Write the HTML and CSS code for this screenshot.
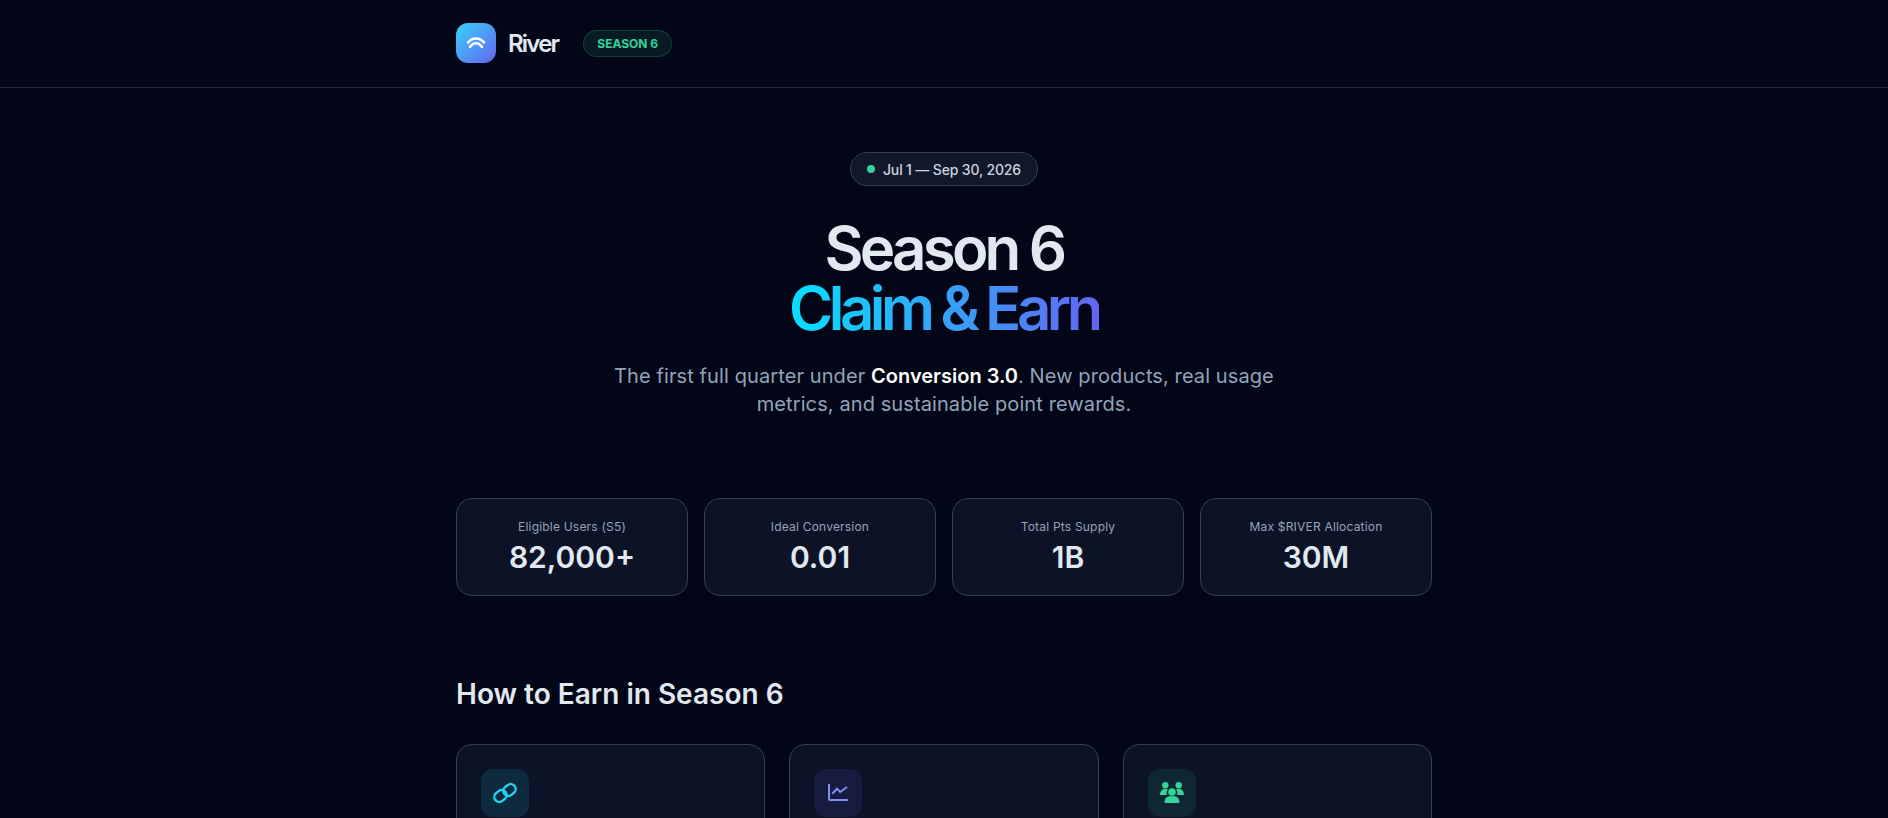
FILE: index.html
```html
<!DOCTYPE html>
<html lang="en">
<head>
  <meta charset="UTF-8" />
  <title>River Season 6</title>
  <link rel="stylesheet" href="styles.css">
</head>
<body>
  <header class="topbar">
    <div class="container topbar-inner">
      <div class="logo-mark">
        <svg width="40" height="40" viewBox="0 0 40 40" fill="none" stroke="#fff" stroke-width="2.500" stroke-linecap="round"><path d="M12 19.500c3.500-5.500 12.500-5.500 16 0"/><path d="M14 24c3-5 9-5 12 0"/></svg>
      </div>
      <span class="logo-text">River</span>
      <span class="season-tag">SEASON 6</span>
    </div>
  </header>
  <main class="container">
    <section class="hero">
      <div class="date-pill"><span class="dot"></span>Jul 1 — Sep 30, 2026</div>
      <h1>Season 6<br><span class="gradient">Claim &amp; Earn</span></h1>
      <p class="lead">The first full quarter under <strong>Conversion 3.0</strong>. New products, real usage metrics, and sustainable point rewards.</p>
    </section>
    <section class="stats">
      <div class="stat"><div class="stat-label">Eligible Users (S5)</div><div class="stat-value">82,000+</div></div>
      <div class="stat"><div class="stat-label">Ideal Conversion</div><div class="stat-value">0.01</div></div>
      <div class="stat"><div class="stat-label">Total Pts Supply</div><div class="stat-value">1B</div></div>
      <div class="stat"><div class="stat-label">Max $RIVER Allocation</div><div class="stat-value">30M</div></div>
    </section>
    <h2>How to Earn in Season 6</h2>
    <section class="cards">
      <div class="card"><div class="icon icon-cyan">
        <svg width="26" height="24" viewBox="0 0 26 24" fill="none" stroke="currentColor" stroke-width="2.400"><rect x="2" y="10" width="13" height="10" rx="5" transform="rotate(-38 8.500 15)"/><rect x="11" y="4" width="13" height="10" rx="5" transform="rotate(-38 17.500 9)"/></svg>
      </div></div>
      <div class="card"><div class="icon icon-indigo">
        <svg width="20" height="20" viewBox="0 0 20 20" fill="none" stroke="currentColor" stroke-width="2"><path d="M1 1v15a1 1 0 0 0 1 1h18"/><path d="M4.300 10.700L9 5.700l3.300 3.300L19 4"/></svg>
      </div></div>
      <div class="card"><div class="icon icon-green">
        <svg width="26" height="22" viewBox="0 0 26 22" fill="currentColor"><circle cx="6.300" cy="3.200" r="3.200"/><circle cx="19.700" cy="3.200" r="3.200"/><circle cx="13" cy="10" r="3.800"/><path d="M1 13c0-3.500 2-6 4.500-6h2.500c.8 0 1 .3.500 1-1 1.500-1.200 3-.7 5z"/><path d="M25 13c0-3.500-2-6-4.500-6H18c-.8 0-1 .3-.5 1 1 1.500 1.200 3 .7 5z"/><path d="M5.700 21v-1.500c0-3 2.300-5.200 5-5.200h4.600c2.700 0 5 2.200 5 5.200V21z"/></svg>
      </div></div>
    </section>
  </main>
</body>
</html>
```

FILE: styles.css
```css
* {
  box-sizing: border-box;
}
html, body {
  height: 818px;
  overflow: hidden;
}
body {
  margin: 0;
  background: #020617;
  color: #e2e8f0;
  font-family: Inter, sans-serif;
}
.container {
  width: 976px;
  margin: 0 auto;
}
.topbar {
  height: 88px;
  border-bottom: 1px solid #1e293b;
}
.topbar-inner {
  height: 86px;
  display: flex;
  align-items: center;
}
.logo-mark {
  width: 40px;
  height: 40px;
  border-radius: 12px;
  background: linear-gradient(135deg, #38d0f8, #6366f1);
}
.logo-text {
  margin-left: 12px;
  font-size: 24px;
  font-weight: 600;
  letter-spacing: -1.8px;
}
.season-tag {
  margin-left: 25px;
  padding: 5px 13px;
  border-radius: 999px;
  background: rgba(52, 211, 153, 0.1);
  border: 1px solid rgba(52, 211, 153, 0.2);
  color: #34d399;
  font-size: 12px;
  font-weight: 700;
}
.hero {
  padding-top: 64px;
  text-align: center;
}
.date-pill {
  display: inline-flex;
  align-items: center;
  gap: 8px;
  height: 34px;
  padding: 0 16px;
  border-radius: 999px;
  background: #1e293b80;
  border: 1px solid #334155;
  color: #cbd5e1;
  font-size: 14px;
  font-weight: 500;
  letter-spacing: -0.15px;
}
.dot {
  width: 8px;
  height: 8px;
  border-radius: 50%;
  background: #34d399;
}
h1 {
  margin: 32px 0 0;
  font-size: 60px;
  line-height: 60px;
  font-weight: 600;
  letter-spacing: -3.8px;
}
.gradient {
  background: linear-gradient(90deg, #06e0ff, #6366f1);
  -webkit-background-clip: text;
  background-clip: text;
  color: transparent;
  letter-spacing: -4.5px;
  word-spacing: -1px;
}
.lead {
  width: 672px;
  margin: 24px auto 0;
  font-size: 20px;
  line-height: 28px;
  letter-spacing: 0.1px;
  color: #94a3b8;
}
.lead strong {
  color: #fff;
  font-weight: 600;
  letter-spacing: 0;
}
.stats {
  margin-top: 80px;
  display: grid;
  grid-template-columns: repeat(4, 1fr);
  gap: 16px;
}
.stat {
  height: 98px;
  padding: 20px;
  border-radius: 16px;
  background: #0f172acc;
  border: 1px solid #334155;
  text-align: center;
}
.stat-label {
  font-size: 12px;
  line-height: 16px;
  letter-spacing: 0.2px;
  color: #94a3b8;
}
.stat-value {
  margin-top: 4px;
  font-size: 30px;
  line-height: 36px;
  font-weight: 600;
}
h2 {
  margin: 80px 0 0;
  font-size: 28px;
  line-height: 36px;
  font-weight: 600;
}
.cards {
  margin-top: 32px;
  display: grid;
  grid-template-columns: repeat(3, 1fr);
  gap: 24px;
}
.card {
  height: 240px;
  padding: 24px;
  border-radius: 16px;
  background: #0f172acc;
  border: 1px solid #334155;
}
.icon {
  width: 48px;
  height: 48px;
  border-radius: 12px;
  display: flex;
  align-items: center;
  justify-content: center;
}
.icon-cyan {
  background: rgba(34, 211, 238, 0.12);
  color: #22d3ee;
}
.icon-indigo {
  background: rgba(99, 102, 241, 0.12);
  color: #818cf8;
}
.icon-green {
  background: rgba(52, 211, 153, 0.1);
  color: #34d399;
}
```
